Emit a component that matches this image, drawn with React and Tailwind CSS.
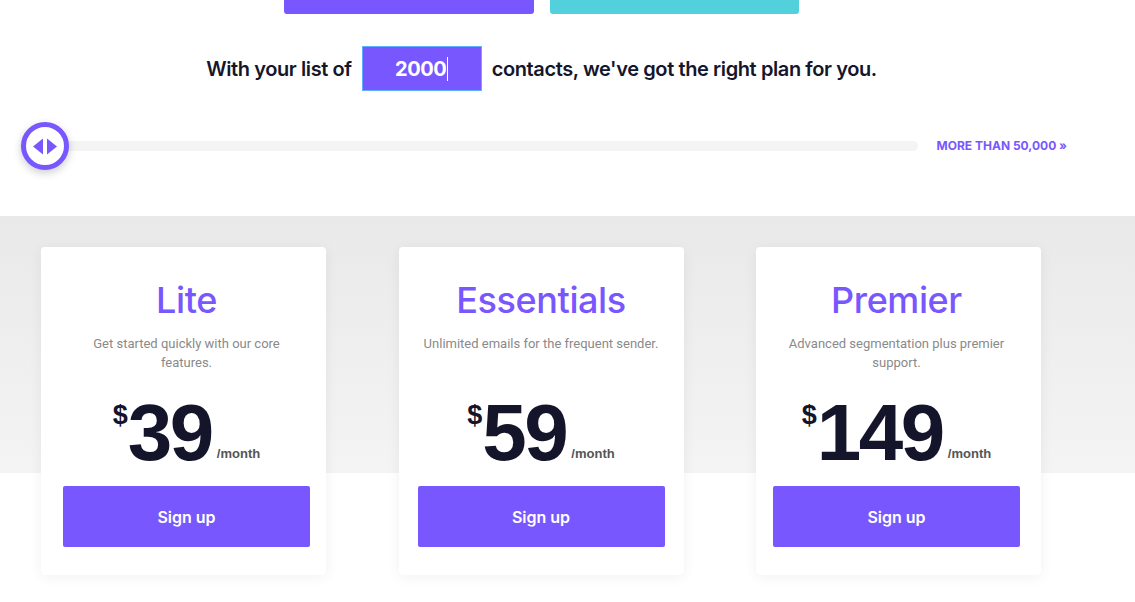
import React from "react";

const PLANS = [
  { name: "Lite", desc: "Get started quickly with our core features.", price: "39", pad: "pl-[22px] pr-[16px]" },
  { name: "Essentials", desc: "Unlimited emails for the frequent sender.", price: "59", pad: "pl-[19px] pr-[19px]" },
  { name: "Premier", desc: "Advanced segmentation plus premier support.", price: "149", pad: "pl-[17px] pr-[21px]" },
];

function PlanCard({ plan }) {
  return (
    <div className={`w-[285px] bg-white rounded-[4px] shadow-[0_2px_14px_rgba(0,0,0,0.06)] ${plan.pad} pt-[33px] pb-[28px] flex flex-col items-center`}>
      <h3 className="text-[36px] leading-[40px] font-medium text-[#7857ff] tracking-[-0.4px]">{plan.name}</h3>
      <p className="mt-[14px] w-[236px] text-center font-['Roboto',sans-serif] text-[13px] leading-[19px] text-[#8a8a8a] min-h-[38px]">
        {plan.desc}
      </p>
      <div className="mt-[21px] flex items-start font-['Liberation_Sans',Arial,sans-serif] text-[#14142b]">
        <span className="text-[27px] leading-none font-bold mt-[9px]">$</span>
        <span className="text-[80px] leading-none font-bold tracking-[-2.5px]">{plan.price}</span>
        <span className="self-end mb-[13px] ml-[5px] text-[13px] leading-none font-bold text-[#555]">/month</span>
      </div>
      <button className="mt-[13px] w-full h-[61px] rounded-[2px] bg-[#7857ff] text-white text-[16px] font-semibold">
        Sign up
      </button>
    </div>
  );
}

export default function App() {
  return (
    <div className="min-h-[602px] bg-white font-['Inter','Noto_Sans',sans-serif] overflow-hidden">
      <div className="w-[1083px]">
        <div className="flex justify-center gap-[16px]">
          <div className="w-[250px] h-[14px] bg-[#7857ff] rounded-b-[3px]" />
          <div className="w-[249px] h-[14px] bg-[#52d0dc] rounded-b-[3px]" />
        </div>

        <div className="mt-[32px] flex items-center justify-center gap-[10px] text-[20px] font-semibold text-[#16162a] tracking-[-0.4px]">
          <span>With your list of</span>
          <div className="w-[120px] h-[45px] bg-[#7857ff] border border-[#5fb0ff] flex items-center justify-center text-white font-bold">
            <span>2000</span>
            <span className="w-px h-[24px] bg-white ml-[1px]" />
          </div>
          <span>contacts, we've got the right plan for you.</span>
        </div>

        <div className="mt-[30px] flex items-center pl-[20px] pr-[16px] h-[50px]">
          <div className="relative flex-1 h-[10px] rounded-full bg-[#f4f4f4]">
            <div className="absolute left-[1px] top-1/2 -translate-y-1/2 w-[48px] h-[48px] rounded-full border-[5px] border-[#7857ff] bg-white shadow-[0_3px_8px_rgba(0,0,0,0.2)] flex items-center justify-center">
              <svg width="24" height="17" viewBox="0 0 24 17">
                <polygon points="0,8.5 10,0.5 10,16.5" fill="#7857ff" />
                <polygon points="14,0.5 24,8.5 14,16.5" fill="#7857ff" />
              </svg>
            </div>
          </div>
          <a className="ml-[19px] text-[12px] font-bold text-[#7857ff] whitespace-nowrap">
            MORE THAN 50,000 »
          </a>
        </div>
      </div>

      <div className="mt-[45px] pt-[31px] pb-[28px] bg-[linear-gradient(to_bottom,#e9e9e9_0px,#f4f4f4_257px,#ffffff_257px)]">
        <div className="pl-[41px] flex gap-[72.5px]">
          {PLANS.map((p) => (
            <PlanCard key={p.name} plan={p} />
          ))}
        </div>
      </div>
    </div>
  );
}
